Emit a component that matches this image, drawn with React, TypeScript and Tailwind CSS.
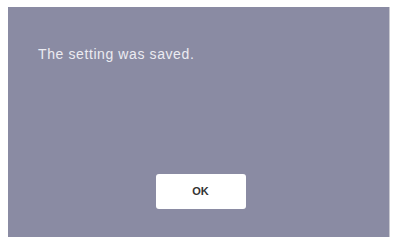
export default function App() {
  return (
    <div className="h-[237px] w-[393px] overflow-hidden bg-white pl-2 pr-[3px] pt-[7px] font-['Liberation_Sans',sans-serif]">
      <div className="flex h-full flex-col border-r border-[#c8c8d0] bg-[#8a8ba3] pl-[30px] pt-[37px] pr-[26px]">
        <p className="text-[14px] tracking-[0.6px] text-[#ececf2]">The setting was saved.</p>
        <div className="mt-[109px] flex justify-center">
          <button
            type="button"
            className="flex h-[35px] w-[90px] items-center justify-center rounded-[3px] bg-white text-[11px] font-bold text-[#333]"
          >
            OK
          </button>
        </div>
      </div>
    </div>
  );
}
